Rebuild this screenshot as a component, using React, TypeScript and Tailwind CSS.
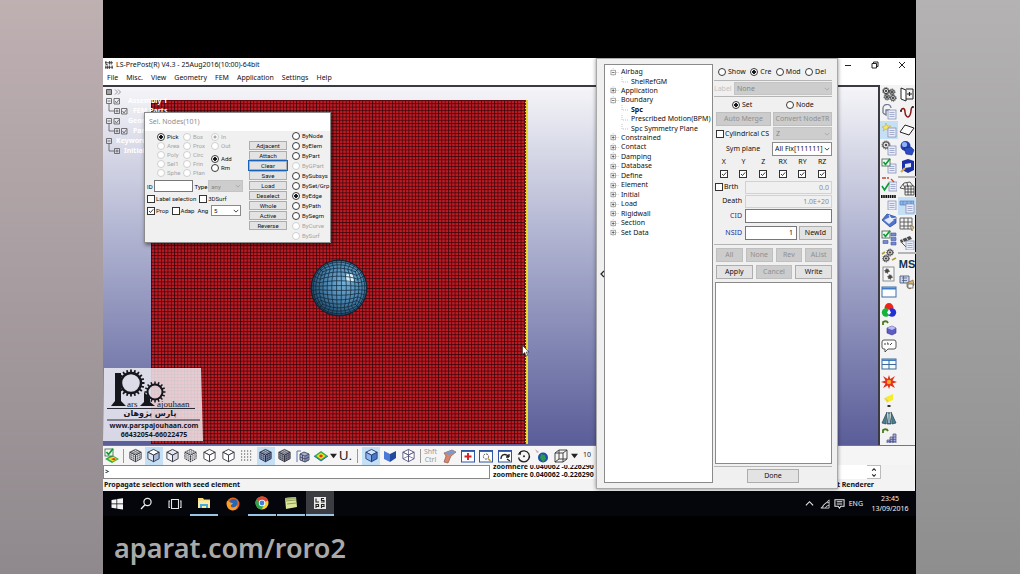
import React from "react";

const tiny = "font-['Roboto','Liberation_Sans',sans-serif] text-[6px] leading-[9px]";
const small = "font-['Noto_Sans','Open_Sans',sans-serif] text-[7px] leading-[10px]";

/* ---------- form controls ---------- */

function Radio({ name, label, checked, disabled }: { name: string; label: string; checked?: boolean; disabled?: boolean }) {
  return (
    <label className={`flex items-center gap-[2px] whitespace-nowrap ${disabled ? "text-[#a5a5a5]" : "text-[#111]"}`}>
      <input
        type="radio"
        name={name}
        defaultChecked={checked}
        disabled={disabled}
        className="size-[8px] shrink-0 appearance-none rounded-full border border-[#3a3a3a] bg-white checked:bg-[radial-gradient(circle,#111_0_1px,#333_2px,#fff_2px)] disabled:border-[#cfcfcf] disabled:checked:bg-[radial-gradient(circle,#aaa_0_1px,#fff_2px)]"
      />
      {label}
    </label>
  );
}

function Check({ label, checked, hideLabel }: { label: string; checked?: boolean; hideLabel?: boolean }) {
  return (
    <label className="flex items-center gap-[1px] whitespace-nowrap text-[#111]">
      <span className="grid">
        <input
          type="checkbox"
          aria-label={label}
          defaultChecked={checked}
          className="peer col-start-1 row-start-1 size-[8px] appearance-none border border-[#333] bg-white"
        />
        <svg viewBox="0 0 8 8" className="pointer-events-none col-start-1 row-start-1 hidden size-[8px] peer-checked:block">
          <path d="M2 4l1.5 1.5L6.2 2.4" fill="none" stroke="#222" strokeWidth="0.9" />
        </svg>
      </span>
      {!hideLabel && label}
    </label>
  );
}

function Select({ label, value, disabled, className }: { label: string; value: string; disabled?: boolean; className: string }) {
  return (
    <span className={`grid min-w-0 ${className}`}>
      <select
        aria-label={label}
        disabled={disabled}
        className="col-start-1 row-start-1 w-full min-w-0 appearance-none border border-[#8a8a8a] bg-white pl-[2px] text-[#111] opacity-100 disabled:border-[#c4c4c4] disabled:bg-[#cdcdcd] disabled:text-[#868686]"
      >
        <option>{value}</option>
      </select>
      <svg viewBox="0 0 8 8" className="pointer-events-none col-start-1 row-start-1 mr-[2px] size-[6px] self-center justify-self-end">
        <path d="M1 2.5l3 3 3-3" fill="none" stroke={disabled ? "#a8a8a8" : "#333"} strokeWidth="1.2" />
      </svg>
    </span>
  );
}

function Btn({ children, disabled, className = "" }: { children: React.ReactNode; disabled?: boolean; className?: string }) {
  return (
    <button
      disabled={disabled}
      className={`flex items-center justify-center whitespace-nowrap border border-[#adadad] bg-[#e3e3e3] text-[#111] disabled:border-[#bfbfbf] disabled:bg-[#cccccc] disabled:text-[#8f8f8f] ${className}`}
    >
      {children}
    </button>
  );
}

/* ---------- drawings ---------- */

type P = [number, number];
const mix = (a: P, b: P, t: number): P => [a[0] + (b[0] - a[0]) * t, a[1] + (b[1] - a[1]) * t];

function faceLines(o: P, u: P, v: P, n: number) {
  let d = "";
  const far: P = [u[0] + v[0] - o[0], u[1] + v[1] - o[1]];
  for (let i = 1; i < n; i++) {
    const t = i / n;
    const a = mix(o, u, t), b = mix(v, far, t), c = mix(o, v, t), e = mix(u, far, t);
    d += `M${a}L${b}M${c}L${e}`;
  }
  return d;
}

const T: P = [8, 1.5], R: P = [14, 4.5], L: P = [2, 4.5], C: P = [8, 7.6], B: P = [8, 14.6], RB: P = [14, 11.4], LB: P = [2, 11.4];
const cubeMesh = faceLines(C, L, R, 3) + faceLines(C, L, B, 3) + faceLines(C, R, B, 3);

function Cube({ top = "#fff", left = "#fff", right = "#fff", mesh, stroke = "#2a2d38", dash, wire }: {
  top?: string; left?: string; right?: string; mesh?: boolean; stroke?: string; dash?: string; wire?: boolean;
}) {
  return (
    <svg viewBox="0 0 16 16" className="size-[15px]">
      <g stroke={stroke} strokeWidth="0.9" strokeLinejoin="round" strokeDasharray={dash}>
        <path d={`M${T}L${R}L${C}L${L}Z`} fill={top} />
        <path d={`M${L}L${C}L${B}L${LB}Z`} fill={left} />
        <path d={`M${R}L${C}L${B}L${RB}Z`} fill={right} />
        {mesh && <path d={cubeMesh} fill="none" strokeWidth="0.5" />}
        {wire && <path d="M2 11.4L8 8.6L14 11.4M8 8.6V1.5" fill="none" strokeWidth="0.7" />}
      </g>
    </svg>
  );
}

function Svg({ children }: { children: React.ReactNode }) {
  return <svg viewBox="0 0 16 16" className="size-[16px]" fill="none">{children}</svg>;
}

const Page = ({ x = 7, y = 6 }: { x?: number; y?: number }) => (
  <g>
    <rect x={x} y={y} width="8" height="9" fill="#e9edfa" stroke="#7d86ad" strokeWidth="0.7" />
    <path d={`M${x + 1.5} ${y + 2.5}h5M${x + 1.5} ${y + 4.5}h5M${x + 1.5} ${y + 6.5}h5`} stroke="#8992bd" strokeWidth="0.7" />
  </g>
);
const GreenCheck = () => (
  <g>
    <rect x="1" y="1" width="8" height="7" fill="#eef8ee" stroke="#3e5c49" strokeWidth="0.8" />
    <path d="M2.5 4l2 2.5L9 .8" stroke="#0c9a35" strokeWidth="1.7" />
  </g>
);
const Gear = ({ x, y, r }: { x: number; y: number; r: number }) => (
  <g stroke="#3c3c3c">
    <circle cx={x} cy={y} r={r} strokeWidth="1" fill="#ddd" />
    <circle cx={x} cy={y} r={r + 0.8} strokeWidth="1" strokeDasharray="1 1" />
    <circle cx={x} cy={y} r="0.7" fill="#222" />
  </g>
);
const Arc = () => <path d="M2 5V2c2-1 4-1 5 1" stroke="#4a7a1c" strokeWidth="1.8" />;

function Rainbow({ check }: { check?: boolean }) {
  return (
    <Svg>
      <path d={check ? "M1 11l7-4 7 4-7 4z" : "M1 8l7-5 7 5-7 5z"} fill="#2fae4e" />
      {check ? (
        <g>
          <path d="M4 11l5-2.500L13 11l-4 2.500z" fill="#f6e21c" />
          <path d="M7 11l3-1 2 1-2 1.500z" fill="#e5341d" />
          <GreenCheck />
        </g>
      ) : (
        <g>
          <path d="M3.5 8L8 4.8 12.500 8 8 11.200z" fill="#f6e21c" />
          <path d="M5.800 8L8 6.300 10.200 8 8 9.700z" fill="#e5341d" />
          <path d="M1 8l7 5 7-5" stroke="#1f63b4" strokeWidth="0.9" />
        </g>
      )}
    </Svg>
  );
}

const colOne: { name: string; on?: boolean; art: React.ReactNode }[] = [
  { name: "Assemblies", art: <Svg><Gear x={5} y={5} r={2.6} /><Gear x={11} y={6} r={2.2} /><Gear x={6} y={11} r={2.2} /><Gear x={12} y={12} r={2.4} /></Svg> },
  { name: "Part settings", art: <Svg><path d="M2 9V5a4 4 0 018-1M2 9l3 2V6h4" stroke="#707894" strokeWidth="1.3" /><Page /></Svg> },
  { name: "Keyword manager", on: true, art: <Svg><path d="M1 5l3-1 1-3 1 3 4 0-3 2 1 3-3-2-3 2 1-3z" fill="#f2e56a" stroke="#b5b25a" strokeWidth="0.6" /><Page /></Svg> },
  { name: "Create entity", art: <Svg><Gear x={5} y={5} r={3.2} /><Page /></Svg> },
  { name: "Part data", art: <Svg><Page /><GreenCheck /></Svg> },
  { name: "Renumber check", art: <Svg><Page x={8} /><path d="M1 2h4M6 2h2M10 3l3 3" stroke="#c14a35" strokeWidth="1.3" /><path d="M1 10l2.500 4L8 7" stroke="#0c9a35" strokeWidth="1.600" /></Svg> },
  { name: "Renumber", art: <Svg><Page x={7} y={7} /><path d="M0 2.500h15" stroke="#111" strokeWidth="3" strokeDasharray="1.600 .6" /></Svg> },
  { name: "Section plane", art: <Svg><path d="M1 8l5-6 9 3v6l-6 4z" fill="#4f74cc" stroke="#30509c" strokeWidth="0.8" /><path d="M3 8l6-3 4 3-5 4z" fill="#dfe9ff" /><path d="M8 3l2 4 5-1" stroke="#fff" strokeWidth="0.9" /></Svg> },
  { name: "Model check", art: <Svg><GreenCheck /><path d="M10 3h5v3h-5zM10 7.500h5v3h-5zM2 10.500h5v3H2zM10 12h5v3h-5z" fill="#7489cf" stroke="#4559a0" strokeWidth="0.6" /></Svg> },
  { name: "Mechanism", art: <Svg><Gear x={9} y={4.500} r={2.600} /><Gear x={5} y={10.500} r={2.600} /><path d="M11 12l4-2M1 6l3-2" stroke="#b39a2d" strokeWidth="1.600" /></Svg> },
  { name: "Group list", art: <Svg><rect x="2" y="1" width="11" height="14" fill="#f6f6f6" stroke="#777" strokeWidth="0.8" /><Gear x={6} y={5} r={1.400} /><Gear x={9} y={11} r={1.400} /></Svg> },
  { name: "Window", art: <Svg><rect x="1" y="3" width="14" height="10" fill="#fbfdff" stroke="#3f6ea6" /><path d="M1 4.500h14" stroke="#3f7cc2" strokeWidth="2" /></Svg> },
  { name: "Colors", art: <Svg><circle cx="8" cy="5.500" r="4.400" fill="#ef2418" /><circle cx="5" cy="10.500" r="4.200" fill="#12b53a" /><circle cx="11" cy="10.500" r="4.200" fill="#2230d8" /><path d="M8 7l2 3.500-2 2.500-2-2.500z" fill="#f4fbff" /></Svg> },
  { name: "Part color", art: <Svg><Arc /><path d="M6 8l5-2 4 2v5l-4 2-5-2z" fill="#5d5bc4" stroke="#37358f" strokeWidth="0.6" /><path d="M6 8l5 2 4-2-4-2z" fill="#b9bbf2" /></Svg> },
  { name: "Annotation", art: <Svg><path d="M3 2h10q2 0 2 2v5q0 2-2 2H7l-3 3v-3H3q-2 0-2-2V4q0-2 2-2z" fill="#fdfdfd" stroke="#444" strokeWidth="0.900" /><path d="M4 5v2M6 5h1v2M9 7l2-2" stroke="#444" /></Svg> },
  { name: "Split window", art: <Svg><rect x="1" y="3" width="14" height="10" fill="#f4faff" stroke="#3c6a94" /><path d="M1 4.200h14" stroke="#3f7cc2" strokeWidth="1.600" /><path d="M8 4v9M1 8.500h14" stroke="#3c6a94" /></Svg> },
  { name: "Explode", art: <Svg><path d="M8 1l1.300 4L14 2l-2.500 4.600L16 8l-4.500 1.500L14 14l-4.700-2.600L8 15l-1.300-3.600L2 14l2.500-4.500L0 8l4.500-1.400L2 2l4.700 3z" fill="#e2301b" /><circle cx="8" cy="8" r="2.200" fill="#f8a62a" /></Svg> },
  { name: "Light", art: <Svg><path d="M5 5l7-3v6l-5 2z" fill="#f7ec2b" /><path d="M4 6l3 4" stroke="#e3d53a" strokeWidth="2" /><path d="M6.500 14h3" stroke="#333" strokeWidth="2" /></Svg> },
  { name: "Mirror", art: <Svg><path d="M8 2l2 12H6zM6 2L1 13l4 1zM10 2l5 11-4 1z" fill="#4a7f92" stroke="#25434f" strokeWidth="0.7" /><path d="M8 4v9" stroke="#cfe6ef" /></Svg> },
  { name: "Histogram", art: <Svg><Arc /><path d="M6 15v-3h3v3M9 15V9h3v6M12 15V6h3v9" fill="#a7aede" stroke="#4a4f78" strokeWidth="0.7" /><path d="M6 13.500h9M9 11.500h6M12 9h3" stroke="#4a4f78" strokeWidth="0.600" /></Svg> },
];

const colTwoA: { name: string; art: React.ReactNode }[] = [
  { name: "Reference geometry", art: <Svg><path d="M2 2l5 2v11l-5-2z" fill="#fff" stroke="#222" /><path d="M7 3h7v10H7" stroke="#222" /><path d="M8 8h5M10.500 6v4" stroke="#222" strokeWidth="1.200" /></Svg> },
  { name: "Curve", art: <Svg><path d="M2 7c1-4 4-3 4 1s3 7 5 3 0-8 3-8" stroke="#8e1a1a" strokeWidth="1.500" /><circle cx="14" cy="3" r="1" fill="#222" /><circle cx="2" cy="7" r="1" fill="#222" /></Svg> },
  { name: "Surface", art: <Svg><path d="M6 3l9 3-5 7-9-3z" fill="#fbfbfb" stroke="#222" /></Svg> },
  { name: "Solid", art: <Svg><circle cx="6.500" cy="6" r="5" fill="#1f3fae" /><circle cx="5.500" cy="4.500" r="2.600" fill="#8fb0f5" /><path d="M5 8l7-1 3 3-2 5-6-1z" fill="#2a4bc3" stroke="#132a77" strokeWidth="0.600" /></Svg> },
  { name: "Geometry tools", art: <Svg><path d="M3 3l6-2 6 2v9l-6 3-6-3z" fill="#1d2fa5" /><path d="M6 6l6-1v4l-6 1z" fill="#dce7fb" /><path d="M2 14l4-4" stroke="#e0ae2a" strokeWidth="2.200" /></Svg> },
];
const grid = <path d="M6 6h9v9H6zM9 6v9M12 6v9M6 9h9M6 12h9" stroke="#333" strokeWidth="0.8" />;
const colTwoB: { name: string; on?: boolean; art: React.ReactNode }[] = [
  { name: "Mesh", art: <Svg><path d="M1 8l4-5 6-1 3 4M4 4l2 4M8 3l1 4M1 8l5 1" stroke="#444" strokeWidth="0.9" />{grid}</Svg> },
  { name: "Model and part", on: true, art: <Svg><path d="M1 3h14l-1 4H1z" fill="#8fb4e8" stroke="#5a82bd" strokeWidth="0.7" /><path d="M4 3v4M8 3v4M12 3v4" stroke="#5a82bd" strokeWidth="0.7" /><Page /></Svg> },
  { name: "Element tools", art: <Svg><path d="M1 2h12v11H1zM5 2v11M9 2v11M1 6h12M1 10h12" stroke="#555" strokeWidth="0.9" /><path d="M11 9l2 6 2-4z" fill="#d9c39b" stroke="#7a6134" strokeWidth="0.600" /></Svg> },
  { name: "Post", art: <Svg><path d="M1 6l10-4 2 3-11 4z" fill="#4a4a4a" /><path d="M3 5l2 3M7 3l2 3" stroke="#ddd" /><path d="M3 9l4 4" stroke="#a33" /><Page x={7} y={7} /></Svg> },
];

function ToolButton({ name, on, children }: { name: string; on?: boolean; children: React.ReactNode }) {
  return (
    <button aria-label={name} className={`grid size-[18px] shrink-0 place-items-center ${on ? "bg-[#c5dff5]" : ""}`}>
      {children}
    </button>
  );
}

/* Grid of a cube projected onto the front half of a sphere */
function sphereMesh(r: number) {
  const n = 9;
  const at = (i: number) => Math.tan(((i / n) * 2 - 1) * (Math.PI / 4));
  let d = "";
  const put = (x: number, y: number, z: number, pen: string) => {
    const k = r / Math.hypot(x, y, z);
    d += `${pen}${(x * k).toFixed(2)} ${(y * k).toFixed(2)}`;
  };
  for (let i = 0; i <= n; i++) {
    const a = at(i);
    for (let j = 0; j <= n; j++) put(a, at(j), 1, j ? "L" : "M");
    for (let j = 0; j <= n; j++) put(at(j), a, 1, j ? "L" : "M");
    for (const s of [-1, 1]) {
      for (let j = 0; j <= 5; j++) put(a, s, 1 - j / 5, j ? "L" : "M");
      for (let j = 0; j <= 5; j++) put(s, a, 1 - j / 5, j ? "L" : "M");
    }
  }
  for (const z of [0.2, 0.42, 0.68]) {
    for (const s of [-1, 1]) {
      for (let j = 0; j <= n; j++) put(at(j), s, z, j ? "L" : "M");
      for (let j = 0; j <= n; j++) put(s, at(j), z, j ? "L" : "M");
    }
  }
  return d;
}
const ballMesh = sphereMesh(28);

function Plate() {
  return (
    <svg className="absolute top-[13px] left-[48px] h-[calc(100%-14px)] w-[378px]">
      <defs>
        <pattern id="cells" width="3.3" height="3.3" patternUnits="userSpaceOnUse">
          <rect width="3.3" height="3.3" fill="#c31a24" />
          <path d="M0 .5H3.300M.5 0V3.300" stroke="#2a0407" strokeWidth="0.7" />
        </pattern>
        <radialGradient id="ball" cx="0.6" cy="0.38" r="0.65">
          <stop offset="0" stopColor="#79b4da" />
          <stop offset="0.55" stopColor="#4a83ad" />
          <stop offset="1" stopColor="#1f4766" />
        </radialGradient>
      </defs>
      <rect width="375" height="100%" fill="url(#cells)" />
      <path d="M0 .5H375" stroke="#5d0a10" />
      <rect x="374" width="3" height="100%" fill="#e8d92c" />
      <path d="M374.500 0V600" stroke="#4d3a08" strokeDasharray="2 1" />
      <g transform="translate(188 188)">
        <circle r="28" fill="url(#ball)" />
        <rect x="7" y="-14" width="8" height="8" rx="2" fill="#d8f0fb" />
        <path d={ballMesh} fill="none" stroke="#0d2233" strokeWidth="0.7" />
        <circle r="28" fill="none" stroke="#10222f" />
      </g>
    </svg>
  );
}

function teeth(cx: number, cy: number, r: number, n: number) {
  let d = "";
  for (let i = 0; i < n; i++) {
    const a = (i / n) * Math.PI * 2;
    d += `M${cx + Math.cos(a) * r} ${cy + Math.sin(a) * r}L${cx + Math.cos(a) * (r + 3)} ${cy + Math.sin(a) * (r + 3)}`;
  }
  return d;
}

function Watermark() {
  return (
    <svg viewBox="0 0 100 73" className="absolute bottom-[4px] left-0 h-[73px] w-[100px]">
      <path d="M1 0H98L100 73H0Z" fill="#f3f1f7" opacity="0.82" />
      <g stroke="#16161d" fill="none">
        <circle cx="28" cy="15" r="10" strokeWidth="2.400" />
        <path d={teeth(28, 15, 10.500, 20)} strokeWidth="1.800" />
        <circle cx="52" cy="24" r="7.500" strokeWidth="2" />
        <path d={teeth(52, 24, 7.500, 16)} strokeWidth="1.500" />
        <path d="M4 40.500H92M4 52H97" strokeWidth="0.9" />
      </g>
      <path d="M12 5h6v28l5 5H8l4-5zM41 24l6 6v4l5 4H37l4-4z" fill="#16161d" />
      <g fill="#16161d">
        <text x="24" y="39" fontSize="9" fontFamily="Liberation Serif, serif">ars</text>
        <text x="54" y="39" fontSize="9" fontFamily="Liberation Serif, serif">ajouhaan</text>
        <text x="47" y="48" fontSize="8" fontWeight="700" textAnchor="middle" fontFamily="DejaVu Sans, sans-serif" direction="rtl">پارس پژوهان</text>
        <text x="51" y="60" fontSize="7" fontWeight="700" textAnchor="middle" fontFamily="Noto Sans, sans-serif">www.parspajouhaan.com</text>
        <text x="51" y="69" fontSize="7" fontWeight="700" textAnchor="middle" fontFamily="Noto Sans, sans-serif">66432054-66022475</text>
      </g>
    </svg>
  );
}

/* ---------- node selection window ---------- */

const actions = ["Adjacent", "Attach", "Clear", "Save", "Load", "Deselect", "Whole", "Active", "Reverse"];
const modes: [string, boolean][] = [
  ["ByNode", true], ["ByElem", true], ["ByPart", true], ["ByGPart", false], ["BySubsys", true], ["BySet/Grp", true],
  ["ByEdge", true], ["ByPath", true], ["BySegm", true], ["ByCurve", false], ["BySurf", false],
];

function SelectNodes() {
  return (
    <section className={`absolute top-[54px] left-[41px] w-[187px] border border-[#8b8b8b] bg-[#f0f0f0] pb-[2px] shadow-[1px_2px_4px_rgba(0,0,0,.5)] ${tiny}`}>
      <h2 className="bg-white px-[4px] font-['Noto_Sans',sans-serif] text-[7px] leading-[18px] text-[#8d8d8d]">Sel. Nodes(101)</h2>
      <div className="flex gap-[4px] pl-[2px]">
        <div className="w-[98px]">
          <div className="flex gap-[6px] pt-[1px] pl-[10px]">
            <div className="w-[20px]">
              <Radio name="shape" label="Pick" checked />
              {["Area", "Poly", "Sel1", "Sphe"].map((t) => <Radio key={t} name="shape" label={t} disabled />)}
            </div>
            <div className="w-[22px]">
              {["Box", "Prox", "Circ", "Frin", "Plan"].map((t) => <Radio key={t} name="shape" label={t} disabled />)}
            </div>
            <div>
              <Radio name="side" label="In" checked disabled />
              <Radio name="side" label="Out" disabled />
              <div className="pt-[4px]">
                <Radio name="op" label="Add" checked />
                <Radio name="op" label="Rm" />
              </div>
            </div>
          </div>
          <div className="flex items-center gap-[1px] pt-[3px]">
            <label htmlFor="node-id">ID</label>
            <input id="node-id" className="h-[12px] w-[39px] border border-[#777] bg-white px-[1px]" />
            <span className="pl-[1px]">Type</span>
            <Select label="Type" value="any" disabled className="h-[12px] w-[35px]" />
          </div>
          <div className="flex gap-[3px] pt-[2px]">
            <Check label="Label selection" />
            <Check label="3DSurf" />
          </div>
          <div className="flex items-center gap-[3px] pt-[2px]">
            <Check label="Prop" checked />
            <Check label="Adap" />
            <span>Ang</span>
            <Select label="Ang" value="5" className="h-[11px] w-[30px]" />
          </div>
        </div>
        <div className="flex w-[38px] flex-col gap-[1px] pt-[10px]">
          {actions.map((a) => (
            <Btn key={a} className={a === "Clear" ? "h-[9px] border-[#1a62b8] outline outline-[#1a62b8]" : "h-[9px]"}>{a}</Btn>
          ))}
        </div>
        <div className="flex flex-col gap-[1px] pl-[1px]">
          {modes.map(([m, ok]) => <Radio key={m} name="mode" label={m} disabled={!ok} checked={m === "ByEdge"} />)}
        </div>
      </div>
    </section>
  );
}

/* ---------- keyword entity window ---------- */

const tree: { name: string; open?: boolean; kids?: string[] }[] = [
  { name: "Airbag", kids: ["ShelRefGM"] },
  { name: "Application" },
  { name: "Boundary", kids: ["Spc", "Prescribed Motion(BPM)", "Spc Symmetry Plane"] },
  { name: "Constrained" }, { name: "Contact" }, { name: "Damping" }, { name: "Database" }, { name: "Define" },
  { name: "Element" }, { name: "Initial" }, { name: "Load" }, { name: "Rigidwall" }, { name: "Section" }, { name: "Set Data" },
];

function Toggle({ open }: { open?: boolean }) {
  return (
    <svg viewBox="0 0 10 10" className="h-[9px] w-[10px] shrink-0">
      <path d="M6 5h4M3 0v2M3 8v2" stroke="#aaa" strokeWidth="0.7" strokeDasharray="1 1" />
      <rect x=".5" y="2.500" width="5" height="5" fill="#fff" stroke="#8a8a8a" strokeWidth="0.8" />
      <path d={open ? "M1.500 5h3" : "M1.500 5h3M3 3.500v3"} stroke="#333" strokeWidth="0.7" />
    </svg>
  );
}

const Rule = () => <hr className="border-0 border-t border-[#b5b5b5]" />;

function EntityWindow() {
  return (
    <section className={`absolute top-0 right-[77px] bottom-[2px] flex w-[242px] gap-[1px] border border-[#a9a9a9] bg-[#f0f0f0] py-[5px] pr-[5px] shadow-[0_0_4px_rgba(0,0,0,.45)] ${small}`}>
      <button aria-label="Collapse panel" className="grid w-[8px] shrink-0 place-items-center">
        <svg viewBox="0 0 8 12" className="h-[12px] w-[8px]"><path d="M7 3L4 6l3 3" fill="none" stroke="#222" strokeWidth="1.200" /></svg>
      </button>
      <ul className="-ml-[2px] w-[109px] shrink-0 overflow-hidden border border-[#8a8a8a] bg-white pt-[2px] pl-[5px] text-[#111]">
        {tree.map((t) => (
          <li key={t.name}>
            <div className="flex h-[10px] items-center gap-[1px] [li:nth-child(even)>&]:h-[9px]"><Toggle open={!!t.kids} />{t.name}</div>
            {t.kids && (
              <ul className="pl-[9px]">
                {t.kids.map((k) => (
                  <li key={k} className="flex h-[9px] items-center gap-[2px] whitespace-nowrap even:h-[10px]">
                    <svg viewBox="0 0 10 9" className="h-[9px] w-[10px] shrink-0"><path d="M3 0v5h6" fill="none" stroke="#aaa" strokeWidth="0.7" strokeDasharray="1 1" /></svg>
                    <span className={k === "Spc" ? "font-bold" : ""}>{k}</span>
                  </li>
                ))}
              </ul>
            )}
          </li>
        ))}
      </ul>
      <div className="flex min-w-0 flex-1 flex-col text-[#111]">
        <div className="flex h-[16px] items-center justify-between pr-[6px] pl-[4px]">
          <Radio name="cmd" label="Show" />
          <Radio name="cmd" label="Cre" checked />
          <Radio name="cmd" label="Mod" />
          <Radio name="cmd" label="Del" />
        </div>
        <Rule />
        <div className="flex h-[15px] items-center justify-between">
          <span className="text-[#c2c2c2]">Label</span>
          <Select label="Label" value="None" disabled className="h-[13px] w-[98px]" />
        </div>
        <Rule />
        <div className="flex h-[15px] items-center gap-[27px] pl-[18px]">
          <span className="w-[27px]"><Radio name="target" label="Set" checked /></span>
          <Radio name="target" label="Node" />
        </div>
        <div className="flex gap-[2px] pl-[2px]">
          <Btn disabled className="h-[14px] w-[55px] overflow-hidden">Auto Merge</Btn>
          <Btn disabled className="h-[14px] w-[59px] overflow-hidden">Convert NodeTR</Btn>
        </div>
        <div className="flex h-[15px] items-center justify-between pl-[2px]">
          <Check label="Cylindrical CS" />
          <Select label="Coordinate axis" value="Z" disabled className="h-[13px] w-[59px]" />
        </div>
        <div className="flex h-[15px] items-center justify-between pl-[12px]">
          <span>Sym plane</span>
          <Select label="Sym plane" value="All Fix[111111]" className="h-[14px] w-[60px]" />
        </div>
        <div className="grid grid-cols-6 pt-[1px]">
          {["X", "Y", "Z", "RX", "RY", "RZ"].map((d) => (
            <div key={d} className="flex flex-col items-center gap-[3px]">
              <span>{d}</span>
              <Check label={d} checked hideLabel />
            </div>
          ))}
        </div>
        <div className="grid grid-cols-[28px_1fr] items-center gap-x-[3px] pt-[2px]">
          <div className="flex h-[14px] items-center pl-[1px]"><Check label="Brth" /></div>
          <input aria-label="Birth value" disabled defaultValue="0.0" className="h-[13px] min-w-0 border border-[#d2d2d2] px-[2px] text-right text-[#8b8b8b]" />
          <label htmlFor="death" className="text-right leading-[14px]">Death</label>
          <input id="death" disabled defaultValue="1.0E+20" className="h-[13px] min-w-0 border border-[#d2d2d2] px-[2px] text-right text-[#8b8b8b]" />
          <label htmlFor="cid" className="text-right leading-[16px] text-[#2b2b9a]">CID</label>
          <input id="cid" className="h-[14px] min-w-0 border border-[#777] bg-white px-[2px] text-right" />
          <label htmlFor="nsid" className="text-right leading-[17px] text-[#2b2b9a]">NSID</label>
          <div className="flex gap-[2px]">
            <input id="nsid" defaultValue="1" className="h-[14px] w-[52px] border border-[#777] bg-white px-[3px] text-right" />
            <Btn className="h-[14px] flex-1">NewId</Btn>
          </div>
        </div>
        <div className="py-[3px]"><Rule /></div>
        <div className="grid grid-cols-4 gap-[3px] pb-[3px] pl-[2px]">
          {["All", "None", "Rev", "AList"].map((t) => <Btn key={t} disabled className="h-[14px]">{t}</Btn>)}
        </div>
        <div className="grid grid-cols-3 gap-[3px] pb-[3px] pl-[2px]">
          <Btn className="h-[14px]">Apply</Btn>
          <Btn disabled className="h-[14px]">Cancel</Btn>
          <Btn className="h-[14px]">Write</Btn>
        </div>
        <div className="ml-[1px] flex-1 border border-[#8a8a8a] bg-white" />
        <div className="py-[2px]"><Rule /></div>
        <div className="flex justify-center"><Btn className="h-[14px] w-[52px]">Done</Btn></div>
      </div>
    </section>
  );
}

/* ---------- bars ---------- */

const Sep = () => <span className="h-[14px] w-px shrink-0 bg-[#999]" />;
const Caret = () => <svg viewBox="0 0 8 8" className="size-[7px] shrink-0"><path d="M0 2h8L4 7z" fill="#222" /></svg>;

const viewIcons: { name: string; on?: boolean; art: React.ReactNode }[] = [
  { name: "Mesh view", art: <Cube mesh /> },
  { name: "Shaded view", on: true, art: <Cube left="#dbe5f4" right="#a3b8da" /> },
  { name: "Hidden view", art: <Cube top="#e4e7ef" left="#f4f4f8" right="#d6d8e4" /> },
  { name: "Feature lines", art: <Cube mesh dash="2 0.500" /> },
  { name: "Edges", art: <Cube top="#fafafa" /> },
  { name: "Outline", art: <Cube /> },
  { name: "Points", art: <Svg><path d="M2 3h12M2 6h12M2 9h12M2 12h12" stroke="#444" strokeWidth="1.200" strokeDasharray="1.200 1.800" /></Svg> },
  { name: "Shaded mesh", on: true, art: <Cube mesh top="#d3dcf0" left="#a5b3d6" right="#8291b8" stroke="#1c2236" /> },
  { name: "Shaded edges", art: <Cube mesh top="#d4d6e2" left="#a5a8bc" right="#888b9e" /> },
  { name: "Shrink", art: <Svg><path d="M2 3v11M2 3h4" stroke="#5d73b5" /><path d="M5 6l4-2 5 2v6l-4 2-5-2z" fill="#a9b2cf" stroke="#2c3350" strokeWidth="0.8" /><path d="M5 9l5 2 4-2M5 6l5 2 4-2M10 8v6M7.500 7v6M12 7v6" stroke="#2c3350" strokeWidth="0.700" /></Svg> },
];

const zoomBox = <rect x="1.500" y="2.500" width="13" height="11.500" fill="#fcfdff" stroke="#2f55a4" />;
const zoomBar = <path d="M1 3h14" stroke="#2f55a4" strokeWidth="1.800" />;

function BottomTools() {
  return (
    <div className="flex h-[20px] items-center overflow-hidden border-t border-[#777] bg-[#f5f5f5]">
      <ToolButton name="Fringe check"><Rainbow check /></ToolButton>
      <div className="flex items-center pl-[2px]"><Sep /></div>
      <div className="ml-[2px] flex w-[186px] shrink-0 items-center justify-between">
        {viewIcons.map((v) => <ToolButton key={v.name} name={v.name} on={v.on}>{v.art}</ToolButton>)}
      </div>
      <ToolButton name="Fringe"><Rainbow /></ToolButton>
      <Caret />
      <span className="pl-[2px] font-['Liberation_Sans',sans-serif] text-[13px] leading-[16px] text-[#222]">U.</span>
      <div className="flex items-center pl-[5px]"><Sep /></div>
      <div className="ml-[4px] flex w-[55px] shrink-0 items-center justify-between">
        <ToolButton name="Perspective" on><Cube top="#cfe2fb" left="#8db5ee" right="#4a78c8" stroke="#20366e" /></ToolButton>
        <ToolButton name="Two face"><Svg><path d="M2 3l6 3v8l-6-3z" fill="#4a79d8" /><path d="M8 6l6-3v7l-6 4z" fill="#23489f" /></Svg></ToolButton>
        <ToolButton name="Wireframe"><Cube wire stroke="#4b4a78" /></ToolButton>
      </div>
      <div className="flex items-center pl-[3px]"><Sep /></div>
      <span className="w-[19px] text-center font-['Noto_Sans',sans-serif] text-[7px] leading-[8px] text-[#9a9a9a]">Shft Ctrl</span>
      <div className="flex w-[130px] shrink-0 items-center justify-between">
        <ToolButton name="Brush"><Svg><path d="M3 5l8-3 4 2-5 4-3 7-4-1 2-6z" fill="#d98668" stroke="#8d5a58" strokeWidth="0.700" /><path d="M3 5l8-3 4 2-7 3z" fill="#7d97cf" /></Svg></ToolButton>
        <ToolButton name="Center"><Svg>{zoomBox}{zoomBar}<path d="M8 5v7M4.500 8.500h7" stroke="#d81e1e" strokeWidth="1.900" /></Svg></ToolButton>
        <ToolButton name="Zoom window"><Svg>{zoomBox}{zoomBar}<circle cx="8" cy="8.500" r="2.600" stroke="#555" strokeDasharray="2 1" /><path d="M10 10.500l2.500 2.500" stroke="#c49a2c" strokeWidth="1.500" /></Svg></ToolButton>
        <ToolButton name="Zoom back"><Svg>{zoomBox}{zoomBar}<path d="M4 11c0-5 5-6 8-2M12 9V6M12 9H9M10 11l3 2" stroke="#222" strokeWidth="1.300" /></Svg></ToolButton>
        <ToolButton name="Rotate"><Svg><path d="M3.500 5A5.500 5.500 0 118 13.800 5.500 5.500 0 012.600 9.500" stroke="#222" strokeWidth="1.300" /><path d="M1.500 6.500L5 6.800 4.800 3" fill="#222" /><circle cx="8" cy="8.300" r="1" fill="#222" /></Svg></ToolButton>
        <ToolButton name="Globe"><Svg><circle cx="9" cy="9.500" r="5" fill="#1a4fae" /><path d="M7 6l4 1 1 4-3 3-3-4z" fill="#2d9a4b" /><path d="M1 1l4 3-2 1z" fill="#caa" /></Svg></ToolButton>
        <ToolButton name="Box view"><Svg><path d="M2 5h8v9H2zM2 5l4-3h8v9l-4 3M10 5l4-3M6 2v9H14M6 11l-4 3" stroke="#333" strokeWidth="0.900" /></Svg></ToolButton>
      </div>
      <span className="flex pl-[1px]"><Caret /></span>
      <span className="pl-[5px] font-['Noto_Sans',sans-serif] text-[7px] text-[#222]">10</span>
    </div>
  );
}

const taskApps: { name: string; state: string; art: React.ReactNode }[] = [
  { name: "Start", state: "", art: <Svg><path d="M2.500 4l5-.8v4.300h-5zM8.200 3.100L14 2.300v5.200H8.200zM2.500 8.200h5v4.300l-5-.7zM8.200 8.200H14v5.300l-5.800-.8z" fill="#f5f5f5" /></Svg> },
  { name: "Search", state: "", art: <Svg><circle cx="9.500" cy="6" r="3.600" stroke="#eee" strokeWidth="1.200" /><path d="M7 8.700L3 13" stroke="#eee" strokeWidth="1.300" /></Svg> },
  { name: "Task view", state: "", art: <Svg><path d="M4.500 3.500h7v9h-7zM3 5H2v6.500h1M13 5h1v6.500h-1" stroke="#e5e5e5" strokeWidth="1.100" /></Svg> },
  { name: "File Explorer", state: "border-b-2 border-[#9cc4e4]", art: <Svg><path d="M2 3h5l1 1.500h6V13H2z" fill="#f5d676" /><path d="M2 5.500h12V13H2z" fill="#fbe9a5" /><path d="M4 13V9h8v4h-2v-2H6v2z" fill="#48a9d8" /></Svg> },
  { name: "Firefox", state: "", art: <Svg><circle cx="8" cy="8" r="6.500" fill="#e8661a" /><circle cx="8.500" cy="7" r="4" fill="#2a65b5" /><path d="M2 5c2 0 3 2 6 2-1 2-3 2-2 4 2 2 5 0 6-2 1 4-3 6-6 5S1 10 2 5z" fill="#f7a12b" /></Svg> },
  { name: "Chrome", state: "border-b-2 border-[#9cc4e4]", art: <Svg><circle cx="8" cy="8" r="6.500" fill="#f8cd2e" /><path d="M8 8L2.400 4.800A6.500 6.500 0 0114 5.500z" fill="#dd4436" /><path d="M8 8v0L2.400 4.800A6.500 6.500 0 007.500 14.500L10.500 9.500z" fill="#2fa24f" /><circle cx="8" cy="8" r="3.200" fill="#fff" /><circle cx="8" cy="8" r="2.400" fill="#3f7fe4" /></Svg> },
  { name: "Notepad++", state: "border-b-2 border-[#9cc4e4]", art: <Svg><path d="M2 3l11-1 1 10-11 2z" fill="#dbe49a" /><path d="M3 6l10-1M4 9l9-1" stroke="#8ea056" /><path d="M2 3l11-1v2L2 5z" fill="#9fb36a" /></Svg> },
  { name: "LS-PrePost", state: "border-b-2 border-[#9cc4e4] bg-[#3a3c42]", art: <Svg><rect x="2" y="2" width="12" height="12" fill="#e9e9e9" /><path d="M4 3.500V7h3M12 3.500H9.500v2H12V7H9M4 13V9.500h2.500v2H4M9.500 13V9.500H12v2H9.500" stroke="#222" strokeWidth="1.100" /></Svg> },
];

function Taskbar() {
  return (
    <footer className="flex h-[25px] items-stretch bg-[#04060c] pr-[7px]">
      {taskApps.map((a) => (
        <button key={a.name} aria-label={a.name} className={`mr-[1px] flex w-[28px] items-center justify-center ${a.state}`}>{a.art}</button>
      ))}
      <div className={`ml-auto flex items-center gap-[4px] text-[#f2f2f2] ${small}`}>
        <svg viewBox="0 0 10 10" className="size-[9px]"><path d="M1 7l4-4 4 4" fill="none" stroke="#eee" strokeWidth="1.200" /></svg>
        <svg viewBox="0 0 12 12" className="ml-[1px] size-[11px]"><path d="M2 11L11 2v9zM4 11a6 6 0 017-6M7 11a4 4 0 014-3" fill="none" stroke="#ccc" strokeWidth="1" /></svg>
        <svg viewBox="0 0 12 12" className="size-[11px]"><path d="M1 2h10v7H7.500L6 11 4.500 9H1zM3 4.200h6M3 6.500h6" fill="none" stroke="#eee" strokeWidth="1.100" /></svg>
        <span>ENG</span>
        <div className="ml-[4px] w-[38px] text-center whitespace-nowrap">
          <div>23:45</div>
          <div>13/09/2016</div>
        </div>
      </div>
    </footer>
  );
}

const outline = [
  ["Assembly 1", "FEM Parts"],
  ["Geometry", "Parts"],
  ["Keyword Entity", "Initial"],
];

function Outline() {
  return (
    <div className={`absolute top-0 left-[3px] font-bold whitespace-nowrap text-white ${small}`}>
      <div className="flex h-[9px] items-center gap-[2px] text-[#777]">
        <svg viewBox="0 0 6 6" className="size-[6px]"><path d="M.5.5h5v5h-5zM1 2h4M1 4h4" fill="none" stroke="#555" /></svg>
        <svg viewBox="0 0 8 6" className="h-[6px] w-[8px]"><path d="M1 .5L3.500 3 1 5.500M4 .5L6.500 3 4 5.500" fill="none" stroke="#888" strokeWidth="0.9" /></svg>
      </div>
      {outline.map(([a, b], i) => (
        <React.Fragment key={a}>
          <div className="flex h-[10px] items-center gap-[2px]">
            <svg viewBox="0 0 14 10" className="h-[10px] w-[14px]" fill="none" stroke="#555" strokeWidth="0.8">
              <path d="M.5 2.500h5v5h-5zM1.500 5h3M3 7.500V10" />
              {i < 2 && <path d="M8 2.500h5.500v5.500H8zM9 5l1.500 2L13 3.500" />}
            </svg>
            <span className={i < 2 ? "pl-[6px]" : "-ml-[6px]"}>{a}</span>
          </div>
          <div className="flex h-[10px] items-center gap-[2px] pl-[2px]">
            <svg viewBox="0 0 20 10" className="h-[10px] w-[20px]" fill="none" stroke="#555" strokeWidth="0.8">
              <path d="M1 0v5h5M6.500 2.500h5v5h-5zM7.500 5h3M9 3.500v3" />
              {i < 2 && <path d="M13.500 2.500H19v5.500h-5.500zM14.500 5l1.500 2 2.500-3.500" />}
            </svg>
            <span className={i < 2 ? "pl-[3px]" : "-ml-[6px]"}>{b}</span>
          </div>
        </React.Fragment>
      ))}
    </div>
  );
}

export default function App() {
  return (
    <div className="grid min-h-screen grid-cols-[103px_minmax(0,1fr)_104px] bg-black">
      <div className="bg-linear-to-b from-[#bfb0b2] to-[#8f898d]" />
      <main className="flex min-w-0 flex-col">
        <div className="h-[58px]" />
        <div className="relative mr-[1px] flex flex-1 flex-col bg-[#f3f3f3]">
          <header className={`bg-white pb-[1px] text-[#111] ${small}`}>
            <div className="flex h-[14px] items-center gap-[3px] pl-[2px]">
              <svg viewBox="0 0 9 9" className="size-[8px]"><path d="M1 0v4h2M5 0v4M7 0v4M1 5v4M3 5v4M5 5v4M8 5v4M0 2h9M0 7h9" stroke="#222" strokeWidth="0.9" fill="none" /></svg>
              <h1>LS-PrePost(R) V4.3 - 25Aug2016(10:00)-64bit</h1>
              <div className="ml-auto flex items-center gap-[19px] pr-[9px]">
                <button aria-label="Minimize"><svg viewBox="0 0 8 8" className="size-[8px]"><path d="M1 4.500h6" stroke="#222" /></svg></button>
                <button aria-label="Restore"><svg viewBox="0 0 8 8" className="size-[8px]"><path d="M1 2.500h4.500V7H1zM2.500 2.500V1H7v4.500H5.500" fill="none" stroke="#222" /></svg></button>
                <button aria-label="Close"><svg viewBox="0 0 8 8" className="size-[8px]"><path d="M1 1l6 6M7 1L1 7" stroke="#222" /></svg></button>
              </div>
            </div>
            <nav className="flex h-[12px] items-center gap-[8px] pl-[4px]">
              {["File", "Misc.", "View", "Geometry", "FEM", "Application", "Settings", "Help"].map((m) => <button key={m}>{m}</button>)}
            </nav>
          </header>
          <div className="flex flex-1">
            <div className="relative flex-1 overflow-hidden border-t-2 border-r-2 border-[#3a3a42] bg-linear-to-b from-[#f5f5f8] to-[#5a5d98]">
              <Plate />
              <Outline />
              <Watermark />
              <svg viewBox="0 0 8 12" className="absolute top-[258px] left-[419px] h-[12px] w-[8px]"><path d="M.5.5v9l2.200-2 1.500 3.500 1.500-.7L4.200 7H7z" fill="#fff" stroke="#222" strokeWidth="0.600" /></svg>
            </div>
            <aside className="flex w-[35px] bg-[#f3f3f3]">
              <div className="flex w-[18px] shrink-0 flex-col">
                {colOne.map((t) => <ToolButton key={t.name} name={t.name} on={t.on}>{t.art}</ToolButton>)}
              </div>
              <div className="flex w-[18px] shrink-0 flex-col">
                {colTwoA.map((t) => <ToolButton key={t.name} name={t.name}>{t.art}</ToolButton>)}
                <hr className="my-[1px] border-0 border-t-2 border-[#b5b5b5]" />
                {colTwoB.map((t) => <ToolButton key={t.name} name={t.name} on={t.on}>{t.art}</ToolButton>)}
                <hr className="my-[1px] border-0 border-t-2 border-[#b5b5b5]" />
                <ToolButton name="Metal stamping"><span className="font-['Liberation_Sans',sans-serif] text-[11px] leading-[14px] font-bold text-[#16324f]">MS</span></ToolButton>
                <ToolButton name="Applications"><Svg><path d="M1 2h9v7H1z" fill="#cfd6e6" stroke="#4f5f85" strokeWidth="0.9" /><path d="M3 4h5M3 6.500h5M4.500 2v7" stroke="#4f5f85" strokeWidth="0.8" /><path d="M8 9l6-3 1 5-4 4-3-2z" fill="#e0b36a" stroke="#77603a" strokeWidth="0.700" /><rect x="9" y="10" width="5" height="4" fill="#f7f7f7" stroke="#555" strokeWidth="0.700" /></Svg></ToolButton>
              </div>
            </aside>
          </div>
          <BottomTools />
          <div className={`flex h-[14px] items-stretch font-bold text-[#111] ${small}`}>
            <label className="flex w-[387px] items-center border border-[#888] bg-white px-[1px]">
              &gt;
              <input aria-label="Command" className="min-w-0 flex-1 bg-transparent" />
            </label>
            <div className="flex flex-1 flex-col justify-end overflow-hidden bg-white pl-[3px] leading-[8px] whitespace-nowrap">
              <p>zoomhere 0.040062 -0.226290</p>
              <p>zoomhere 0.040062 -0.226290</p>
            </div>
            <div className="mr-[34px] flex w-[14px] flex-col items-center justify-center border-y border-r border-[#bbb] bg-white">
              <svg viewBox="0 0 6 12" className="h-[11px] w-[6px]"><path d="M1 4l2-2 2 2M1 8l2 2 2-2" fill="none" stroke="#222" strokeWidth="1.100" /></svg>
            </div>
          </div>
          <div className={`flex h-[12px] items-center justify-between bg-[#f3f3f3] pr-[41px] pl-[1px] font-bold text-[#111] ${small}`}>
            <span>Propagate selection with seed element</span>
            <span>Fast Renderer</span>
          </div>
          <SelectNodes />
          <EntityWindow />
        </div>
        <Taskbar />
        <div className="flex h-[58px] items-center pt-[6px] pl-[11px]">
          <p className="font-['Noto_Sans','Open_Sans',sans-serif] text-[27px] leading-[50px] font-semibold text-[#a9a9a9]">aparat.com/roro2</p>
        </div>
      </main>
      <div className="bg-linear-to-b from-[#b4b2b2] to-[#8e8e8e]" />
    </div>
  );
}
